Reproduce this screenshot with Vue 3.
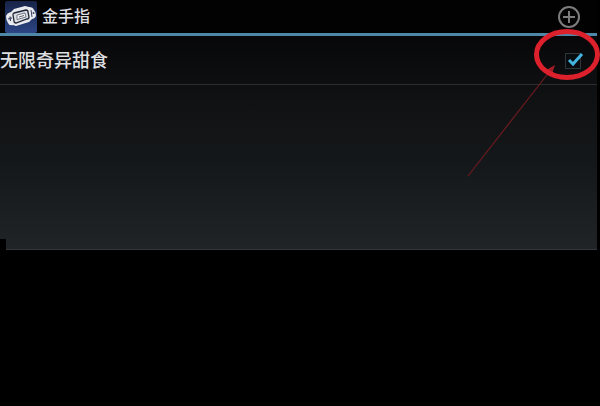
<template>
    <div class="page">
        <main class="screen">
            <header class="action-bar">
                <svg class="logo" viewBox="0 0 32 32" aria-hidden="true">
                    <defs>
                        <linearGradient id="logo-bg" x1="0" y1="0" x2="0" y2="1">
                            <stop offset="0" stop-color="#172348" />
                            <stop offset="1" stop-color="#2c4584" />
                        </linearGradient>
                    </defs>
                    <rect width="32" height="32" rx="2" fill="url(#logo-bg)" />
                    <path d="M1 15 Q2 12 6 11 L9 8 L20 5 L24 6 Q28 6 29 9 Q31 11 31 14 Q31 17 27 18 L24 21 L11 25 L8 24 Q4 25 3 22 Q1 19 1 15Z" fill="#e9ebee" />
                    <path d="M9 12 L21 9 Q23 9 23 11 L24 16 Q24 18 22 18 L11 22 Q9 22 9 20 L8 14 Q8 12 9 12Z" fill="#d9dde1" stroke="#20263a" stroke-width="1.3" />
                    <path d="M12 14 L20 12 L21 16 L12 18.500Z" fill="#f2f3f4" stroke="#555c6c" stroke-width="0.8" />
                    <path d="M14 16 L19 14.500" stroke="#5b6270" stroke-width="1" />
                    <path d="M3 18 L7 17 M5 15.500 L5.500 20" stroke="#384160" stroke-width="1.2" />
                    <path d="M26 9 L27 16" stroke="#384160" stroke-width="1" />
                    <circle cx="28.500" cy="12" r="1" fill="#384160" />
                </svg>
                <h1 class="title">金手指</h1>
                <button class="add-btn" type="button" aria-label="添加">
                    <svg viewBox="0 0 24 24" aria-hidden="true">
                        <circle cx="12" cy="12" r="10" />
                        <path d="M12 6 V18 M6 12 H18" />
                    </svg>
                </button>
            </header>

            <ul class="cheats">
                <li v-for="cheat in cheats" :key="cheat.id" class="cheat">
                    <label class="cheat-name" :for="cheat.id">{{ cheat.name }}</label>
                    <span class="check">
                        <input :id="cheat.id" v-model="cheat.enabled" type="checkbox">
                        <svg v-if="cheat.enabled" class="tick" viewBox="0 0 20 20" aria-hidden="true">
                            <path d="M4 9 L8 13 L17 3" />
                        </svg>
                    </span>
                </li>
            </ul>

            <span class="corner"></span>
        </main>

        <!-- red ring and arrow pointing at the check box -->
        <svg class="marker" viewBox="0 0 140 160" aria-hidden="true">
            <path d="M8 147 L90 42" stroke="#6c1a20" stroke-width="1.2" />
            <path d="M95 36 L92 45 L86 41Z" fill="#a01c26" />
            <ellipse cx="107" cy="25.500" rx="30.500" ry="23" fill="none" stroke="#dc202c" stroke-width="5" />
        </svg>
    </div>
</template>

<script setup>
import { ref } from 'vue'

const cheats = ref([
    { id: 'cheat-sweets', name: '无限奇异甜食', enabled: true }
])
</script>

<style>
body {
    margin: 0;
    background: #000;
}
</style>

<style scoped>
.page {
    position: relative;
    min-height: 100vh;
    background: #000;
    color: #dedfe0;
    font-family: Roboto, "Noto Sans CJK SC", sans-serif;
    overflow: hidden;
}

.screen {
    position: relative;
    box-sizing: border-box;
    min-height: 250px;
    margin-right: 3px;
    background: linear-gradient(#020203 0, #08080b 40px, #0f1012 90px, #15181a 165px, #202427 100%);
    border-bottom: 1px solid #34383a;
}

.action-bar {
    display: flex;
    align-items: center;
    height: 33px;
    padding: 0 16px 0 5px;
    background: #020203;
    border-bottom: 3px solid #4f87a8;
}

.logo {
    width: 32px;
    height: 32px;
}

.title {
    flex: 1;
    margin: 0 0 0 5px;
    font-size: 16px;
    font-weight: 500;
    line-height: 24px;
}

.add-btn {
    width: 24px;
    height: 24px;
    padding: 0;
    border: none;
    background: none;
    cursor: pointer;
}

.add-btn svg {
    display: block;
    fill: none;
    stroke: #7c7c7c;
    stroke-width: 2;
}

.cheats {
    margin: 0;
    padding: 0;
    list-style: none;
}

.cheat {
    display: flex;
    align-items: center;
    box-sizing: border-box;
    height: 49px;
    padding: 2px 16px 0 0;
    border-bottom: 1px solid #2b2d2e;
}

.cheat-name {
    flex: 1;
    font-size: 18px;
    font-weight: 500;
    line-height: 24px;
}

.check {
    position: relative;
    display: flex;
}

.check input {
    appearance: none;
    width: 16px;
    height: 16px;
    margin: 0;
    border: 1px solid #2c363b;
    background: #090c0f;
    cursor: pointer;
}

.tick {
    position: absolute;
    top: -2px;
    left: 0;
    width: 20px;
    height: 20px;
    fill: none;
    stroke: #43b4df;
    stroke-width: 3;
    pointer-events: none;
}

.corner {
    position: absolute;
    bottom: -1px;
    left: 0;
    width: 6px;
    height: 11px;
    background: #000;
}

.marker {
    position: absolute;
    top: 29px;
    right: 0;
    width: 140px;
    height: 160px;
    pointer-events: none;
}
</style>
